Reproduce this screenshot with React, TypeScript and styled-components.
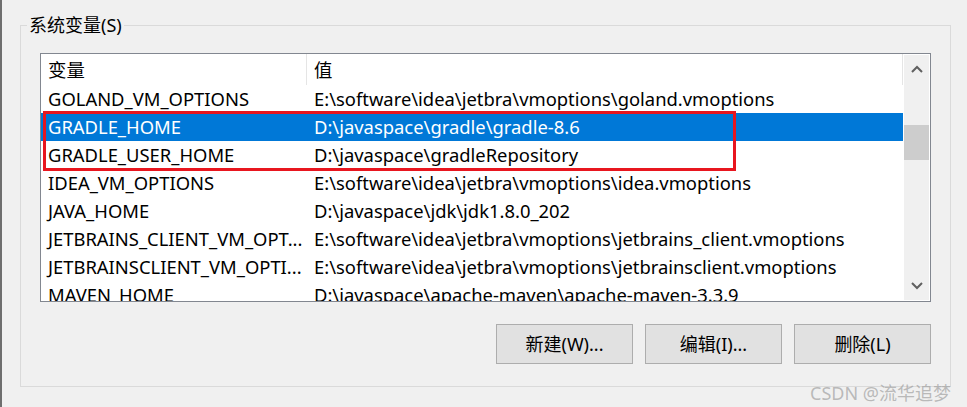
import React from "react";
import styled, { createGlobalStyle } from "styled-components";

const Global = createGlobalStyle`
  html, body { margin: 0; padding: 0; background: #f0f0f0; }
  body { font-family: "Noto Sans", "Noto Sans CJK SC", sans-serif; }
  * { box-sizing: border-box; }
`;

const Window = styled.div`
  position: relative;
  width: 967px;
  height: 407px;
  overflow: hidden;
  background: #f0f0f0;
  border-left: 2px solid #6e6e6e;
  padding: 15px 0 0 18px;
`;

const Group = styled.fieldset`
  margin: 0;
  width: 931px;
  height: 372px;
  border: 1px solid #dadada;
  padding: 18px 19px 0 19px;
  display: flex;
  flex-direction: column;
`;

const Legend = styled.legend`
  margin-left: -13px;
  padding: 0 2px;
  font-family: "Noto Sans", "Noto Sans CJK SC", sans-serif;
  font-size: 18px;
  line-height: 20px;
  color: #000;
`;

const ListBox = styled.div`
  position: relative;
  width: 891px;
  height: 249px;
  border: 1px solid #828790;
  background: #fff;
  display: flex;
  overflow: hidden;
`;

const Table = styled.div`
  flex: 1;
  display: flex;
  flex-direction: column;
  overflow: hidden;
`;

const Row = styled.div<{ $selected?: boolean; $header?: boolean }>`
  display: grid;
  grid-template-columns: 266px 1fr;
  flex: none;
  height: ${(p) => (p.$header ? "31px" : "28px")};
  align-items: center;
  background: ${(p) => (p.$selected ? "#0078d7" : "transparent")};
  color: ${(p) => (p.$selected ? "#fff" : "#000")};
  font-size: 18.4px;
  white-space: nowrap;
`;

const Cell = styled.div<{ $header?: boolean }>`
  padding: 0 0 2px 7px;
  height: 100%;
  display: flex;
  align-items: center;
  overflow: hidden;
  border-right: ${(p) => (p.$header ? "1px solid #e5e5e5" : "none")};
`;

const ScrollBar = styled.div`
  width: 25px;
  margin: 1px;
  background: #f0f0f0;
  display: flex;
  flex-direction: column;
  align-items: center;
`;

const Arrow = styled.div`
  height: 28px;
  width: 100%;
  display: flex;
  align-items: center;
  justify-content: center;
`;

const Track = styled.div`
  flex: 1;
  width: 100%;
  padding-top: 42px;
`;

const Thumb = styled.div`
  height: 35px;
  width: 100%;
  background: #cdcdcd;
`;

const Highlight = styled.div`
  position: absolute;
  left: 2px;
  top: 57px;
  width: 693px;
  height: 60px;
  border: 3px solid #e8161f;
  pointer-events: none;
`;

const Buttons = styled.div`
  display: flex;
  justify-content: flex-end;
  gap: 12px;
  width: 891px;
  margin-top: 22px;
`;

const Button = styled.button`
  width: 137px;
  height: 40px;
  background: #e1e1e1;
  border: 1px solid #adadad;
  font-family: "Noto Sans", "Noto Sans CJK SC", sans-serif;
  font-size: 18px;
  color: #000;
  padding: 0 0 2px;
`;

const Watermark = styled.div`
  position: absolute;
  right: 16px;
  bottom: 2px;
  font-family: "Noto Sans", "Noto Sans CJK SC", sans-serif;
  font-size: 18px;
  color: rgba(160, 160, 160, 0.7);
`;

const rows: [string, string][] = [
  ["GOLAND_VM_OPTIONS", "E:\\software\\idea\\jetbra\\vmoptions\\goland.vmoptions"],
  ["GRADLE_HOME", "D:\\javaspace\\gradle\\gradle-8.6"],
  ["GRADLE_USER_HOME", "D:\\javaspace\\gradleRepository"],
  ["IDEA_VM_OPTIONS", "E:\\software\\idea\\jetbra\\vmoptions\\idea.vmoptions"],
  ["JAVA_HOME", "D:\\javaspace\\jdk\\jdk1.8.0_202"],
  ["JETBRAINS_CLIENT_VM_OPT...", "E:\\software\\idea\\jetbra\\vmoptions\\jetbrains_client.vmoptions"],
  ["JETBRAINSCLIENT_VM_OPTI...", "E:\\software\\idea\\jetbra\\vmoptions\\jetbrainsclient.vmoptions"],
  ["MAVEN_HOME", "D:\\javaspace\\apache-maven\\apache-maven-3.3.9"],
];

const Chevron = ({ up }: { up?: boolean }) => (
  <svg width="12" height="8" viewBox="0 0 12 8">
    <path
      d={up ? "M1 7 L6 2 L11 7" : "M1 1 L6 6 L11 1"}
      fill="none"
      stroke="#606060"
      strokeWidth="2"
    />
  </svg>
);

export default function App() {
  return (
    <>
      <Global />
      <Window>
        <Group>
          <Legend>系统变量(S)</Legend>
          <ListBox>
            <Table>
              <Row $header>
                <Cell $header>变量</Cell>
                <Cell $header>值</Cell>
              </Row>
              {rows.map(([k, v], i) => (
                <Row key={k} $selected={i === 1}>
                  <Cell>{k}</Cell>
                  <Cell>{v}</Cell>
                </Row>
              ))}
            </Table>
            <ScrollBar>
              <Arrow>
                <Chevron up />
              </Arrow>
              <Track>
                <Thumb />
              </Track>
              <Arrow>
                <Chevron />
              </Arrow>
            </ScrollBar>
            <Highlight />
          </ListBox>
          <Buttons>
            <Button>新建(W)...</Button>
            <Button>编辑(I)...</Button>
            <Button>删除(L)</Button>
          </Buttons>
        </Group>
        <Watermark>CSDN @流华追梦</Watermark>
      </Window>
    </>
  );
}
